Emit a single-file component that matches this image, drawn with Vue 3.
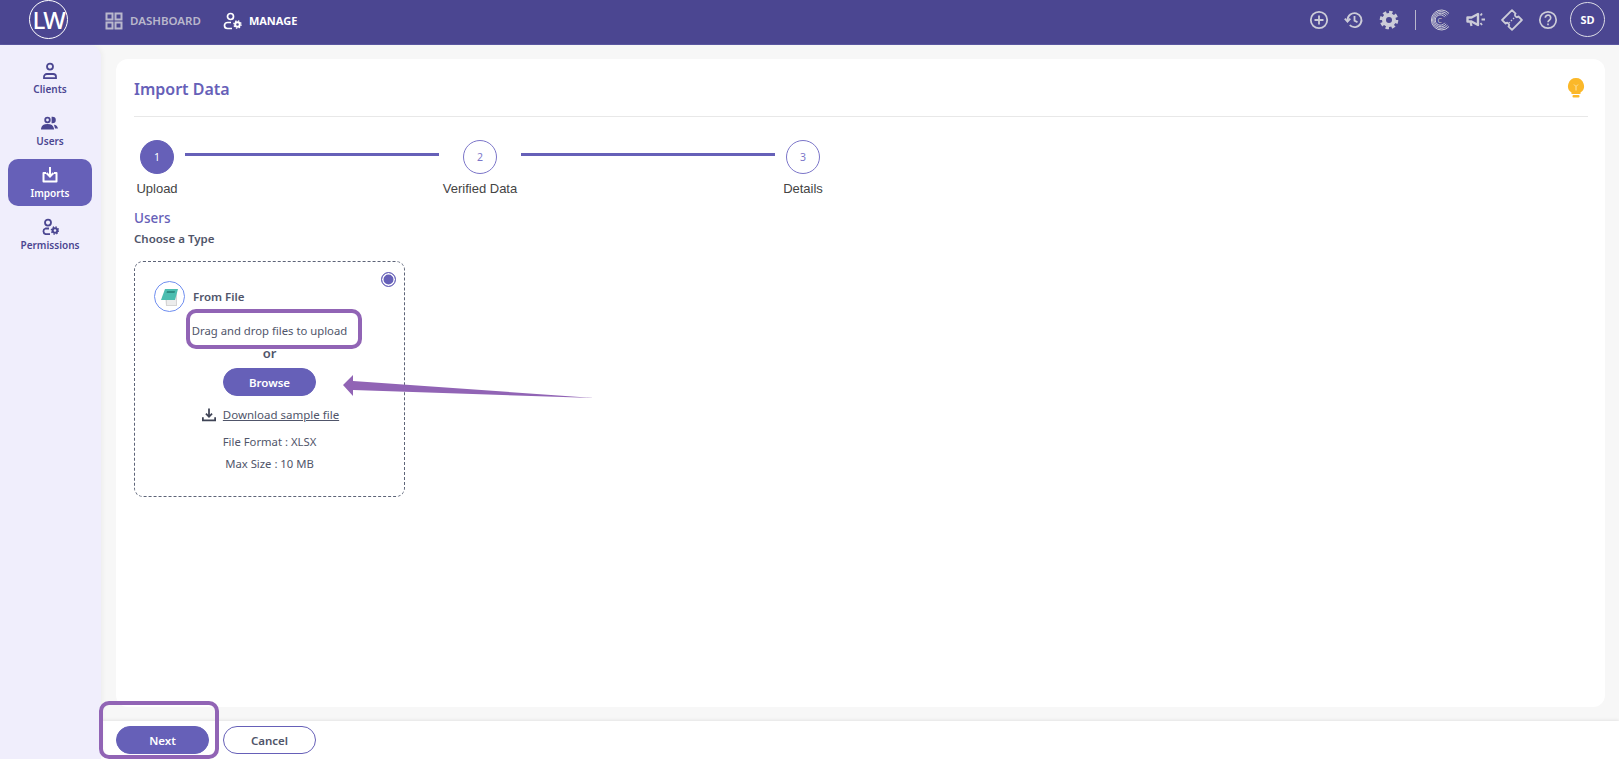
<template>
  <div class="page">
    <header class="topbar">
      <div class="logo">LW</div>
      <nav class="topnav">
        <a class="topnav-item">
          <svg width="18" height="18" viewBox="0 0 18 18" fill="none" stroke="currentColor" stroke-width="2">
            <rect x="1.5" y="1.5" width="6" height="6" /><rect x="10.5" y="1.5" width="6" height="6" />
            <rect x="1.5" y="10.5" width="6" height="6" /><rect x="10.5" y="10.5" width="6" height="6" />
          </svg>
          DASHBOARD
        </a>
        <a class="topnav-item active">
          <svg width="19" height="18" viewBox="0 0 19 18" fill="none" stroke="currentColor" stroke-width="1.7">
            <circle cx="7.5" cy="4.5" r="3" />
            <path d="M8 10.5H4.500a3 3 0 0 0 0 6H9" />
            <circle cx="14.5" cy="12.5" r="2.300" stroke-width="2" />
            <circle cx="14.5" cy="12.5" r="3.600" stroke-width="1.400" stroke-dasharray="1.400 1.430" />
          </svg>
          MANAGE
        </a>
      </nav>
      <div class="top-actions">
        <svg width="20" height="20" viewBox="0 0 20 20" fill="none" stroke="currentColor" stroke-width="1.8">
          <circle cx="10" cy="10" r="8.2" /><path d="M10 5.5v9M5.5 10h9" />
        </svg>
        <svg width="20" height="20" viewBox="0 0 20 20" fill="none" stroke="currentColor" stroke-width="1.8">
          <path d="M3.5 10a7 7 0 1 1 2.2 5.2" /><path d="M0.8 8.6l2.7 3 2.8-3" /><path d="M10.5 6v4.6l3 1.6" />
        </svg>
        <svg width="20" height="20" viewBox="0 0 20 20">
          <circle cx="10" cy="10" r="5" fill="none" stroke="currentColor" stroke-width="4" />
          <circle cx="10" cy="10" r="7.8" fill="none" stroke="currentColor" stroke-width="3" stroke-dasharray="3.4 2.7" />
        </svg>
        <span class="sep"></span>
        <svg width="22" height="22" viewBox="0 0 22 22" fill="none" stroke="currentColor" stroke-width="1">
          <path d="M20 4.500A10 10 0 1 0 20 17.500" /><path d="M18.600 5.800A8.400 8.400 0 1 0 18.600 16.200" />
          <path d="M17.200 7A6.800 6.800 0 1 0 17.200 15" /><path d="M15.800 8.200A5.200 5.200 0 1 0 15.800 13.800" />
          <text x="8.600" y="13.500" font-size="7" fill="currentColor" stroke="none" font-family="Noto Sans, sans-serif">C</text>
        </svg>
        <svg width="20" height="20" viewBox="0 0 20 20" fill="none" stroke="currentColor">
          <path d="M1.500 7.500h4L12 4v11L5.500 11.500h-4z" stroke-width="2.400" stroke-linejoin="round" />
          <path d="M4.500 12l1 4" stroke-width="2.200" />
          <path d="M14.500 5.500l1.500-2M15.500 9.500h3.500M14.500 13l1.500 2" stroke-width="1.800" />
        </svg>
        <svg width="22" height="22" viewBox="0 0 22 22" fill="none" stroke="currentColor" stroke-width="1.800">
          <g transform="rotate(45 11 11)">
            <path d="M4 4H9a2 2 0 0 0 4 0H18V18H13a2 2 0 0 0-4 0H4Z" stroke-linejoin="round" />
            <path d="M11 8v7" stroke-width="1.400" stroke-dasharray="1.500 1.500" />
          </g>
        </svg>
        <svg width="20" height="20" viewBox="0 0 20 20" fill="none" stroke="currentColor" stroke-width="1.7">
          <circle cx="10" cy="10" r="8.2" />
          <path d="M7.3 7.8a2.7 2.7 0 1 1 4.2 2.2c-1 .7-1.5 1.2-1.5 2.2" /><path d="M10 13.6v1.6" />
        </svg>
        <div class="avatar">SD</div>
      </div>
    </header>

    <div class="body">
      <aside class="sidebar">
        <a v-for="item in sideItems" :key="item.label" class="side-item" :class="{ active: item.active }">
          <svg width="18" height="18" viewBox="0 0 18 18" fill="none" stroke="currentColor" stroke-width="1.8">
            <g v-if="item.icon === 'client'">
              <circle cx="9" cy="4.6" r="3" /><path d="M3 16.2v-1.4a2.8 2.8 0 0 1 2.8-2.8h6.4a2.8 2.8 0 0 1 2.8 2.8v1.4z" />
            </g>
            <g v-else-if="item.icon === 'users'">
              <circle cx="6.5" cy="6" r="2.3" /><path d="M11.5 3.6a2.4 2.4 0 0 1 0 4.8z" fill="currentColor" />
              <path d="M1 14.5c.4-2.6 2.6-3.6 5.5-3.6s5 1 5.500 3.600z" fill="currentColor" />
              <path d="M13 10.800c2 .2 3.500 1.400 4 3.700h-3z" fill="currentColor" stroke="none" />
            </g>
            <g v-else-if="item.icon === 'imports'">
              <path d="M9 1v9M5.500 7l3.500 3.500L12.500 7" stroke-width="2" />
              <path d="M5 7H2.500v8.500h13V7H13" stroke-width="2" stroke-linejoin="round" />
            </g>
            <g v-else>
              <circle cx="7" cy="4.600" r="3" /><path d="M8 10.500H4.500a3 3 0 0 0 0 5.700H9" />
              <circle cx="14" cy="12.500" r="2.300" stroke-width="2" />
              <circle cx="14" cy="12.500" r="3.600" stroke-width="1.400" stroke-dasharray="1.400 1.430" />
            </g>
          </svg>
          <span>{{ item.label }}</span>
        </a>
      </aside>

      <main class="main">
        <section class="card">
          <div class="card-head">
            <h1>Import Data</h1>
            <svg width="18" height="21" viewBox="0 0 18 21">
              <path d="M9 1a8 8 0 0 0-4.500 14.600V17h9v-1.400A8 8 0 0 0 9 1z" fill="#fbb829" />
              <rect x="5.500" y="18" width="7" height="2.500" rx="1" fill="#fbb829" />
              <path d="M7 7.500L9 9.500l2-2M9 9.500v4" fill="none" stroke="#fde3a5" stroke-width="1" />
            </svg>
          </div>

          <div class="stepper">
            <template v-for="(step, i) in steps" :key="step.label">
              <div class="step" :class="{ current: i === 0 }">
                <div class="step-circle">{{ i + 1 }}</div>
                <div class="step-label">{{ step.label }}</div>
              </div>
              <div v-if="i < steps.length - 1" class="step-line" :class="{ second: i === 1 }"></div>
            </template>
          </div>

          <h2 class="section-title">Users</h2>
          <p class="section-sub">Choose a Type</p>

          <div class="drop-box">
            <span class="radio"></span>
            <div class="source">
              <span class="source-icon">
                <svg width="20" height="20" viewBox="0 0 20 20">
                  <path d="M5 6h12v13H6z" fill="#d4d4d4" />
                  <path d="M7 9h9v9H7z" fill="#ececec" />
                  <path d="M5 2h13l-3 11H1z" fill="#4cbdb0" />
                  <path d="M7 4h8l-.5 2H6.500z" fill="#2e8f85" />
                </svg>
              </span>
              <span class="source-name">From File</span>
            </div>
            <p class="drag-text">Drag and drop files to upload</p>
            <p class="or">or</p>
            <button class="btn primary">Browse</button>
            <a class="sample">
              <svg width="14" height="14" viewBox="0 0 16 15" fill="none" stroke="#3f4456" stroke-width="2">
                <path d="M8 0v9M4.500 6L8 9.500 11.500 6" /><path d="M1 10v3.500h14V10" />
              </svg>
              <span>Download sample file</span>
            </a>
            <p class="meta">File Format : XLSX</p>
            <p class="meta">Max Size : 10 MB</p>
          </div>
        </section>

        <footer class="footer">
          <button class="btn primary">Next</button>
          <button class="btn outline">Cancel</button>
        </footer>
      </main>
    </div>

    <!-- marks drawn over the screenshot -->
    <div class="mark mark-drag"></div>
    <div class="mark mark-next"></div>
    <svg class="mark-arrow" width="260" height="30" viewBox="0 0 260 30">
      <path d="M2 11L12 1v6l241 17-241-8v6z" fill="#9164b5" />
    </svg>
  </div>
</template>

<script setup>
  const sideItems = [
    { label: "Clients", icon: "client" },
    { label: "Users", icon: "users" },
    { label: "Imports", icon: "imports", active: true },
    { label: "Permissions", icon: "permissions" },
  ];

  const steps = [{ label: "Upload" }, { label: "Verified Data" }, { label: "Details" }];
</script>

<style>
  html,
  body {
    margin: 0;
    height: 100%;
    overflow: hidden;
  }
</style>

<style scoped>
  .page {
    position: relative;
    display: flex;
    flex-direction: column;
    width: 1619px;
    height: 759px;
    overflow: hidden;
    background: #f7f7f7;
    font-family: "Noto Sans", "Open Sans", sans-serif;
    color: #50556a;
  }

  .topbar {
    display: flex;
    align-items: center;
    flex: 0 0 45px;
    height: 45px;
    box-sizing: border-box;
    padding: 0 14px 0 29px;
    background: #4b4691;
    border-bottom: 1px solid #5b57a0;
  }

  .logo {
    display: flex;
    align-items: center;
    justify-content: center;
    width: 39px;
    height: 39px;
    margin-top: -6px;
    box-sizing: border-box;
    border: 1px solid #fff;
    border-radius: 50%;
    color: #fff;
    font-size: 24px;
    font-weight: 500;
    letter-spacing: -1.5px;
  }

  .topnav {
    display: flex;
    gap: 22px;
    margin-left: 37px;
    margin-top: -3px;
  }

  .topnav-item {
    display: flex;
    align-items: center;
    gap: 7px;
    color: #b9b7cc;
    font-size: 11.5px;
    font-weight: 600;
  }

  .topnav-item.active {
    color: #fff;
    font-size: 11px;
    font-weight: 700;
  }

  .top-actions {
    display: flex;
    align-items: center;
    gap: 15px;
    margin-left: auto;
    margin-top: -5px;
    color: #ccccd8;
  }

  .sep {
    width: 1px;
    height: 20px;
    margin: 0 -2.5px 0 1.5px;
    background: #b9b7cc;
  }

  .avatar {
    display: flex;
    align-items: center;
    justify-content: center;
    width: 35px;
    height: 35px;
    margin-left: -2.5px;
    box-sizing: border-box;
    border: 1px solid #dcdce6;
    border-radius: 50%;
    color: #fff;
    font-size: 11px;
    font-weight: 700;
  }

  .body {
    display: flex;
    flex: 1;
    min-height: 0;
  }

  .sidebar {
    display: flex;
    flex-direction: column;
    flex: 0 0 101px;
    box-sizing: border-box;
    padding: 10px 9px 0 8px;
    background: #f0eefc;
    border-top-right-radius: 12px;
    box-shadow: 2px 0 5px rgba(0, 0, 0, 0.04);
    z-index: 1;
  }

  .side-item {
    display: flex;
    flex-direction: column;
    align-items: center;
    justify-content: center;
    gap: 2px;
    height: 47px;
    margin-bottom: 5px;
    border-radius: 10px;
    color: #4b4691;
    font-size: 10px;
    font-weight: 600;
    line-height: 14px;
  }

  .side-item.active {
    background: #6660b8;
    color: #fff;
  }

  .main {
    display: flex;
    flex-direction: column;
    flex: 1;
    min-width: 0;
  }

  .card {
    flex: 1;
    margin: 14px 14px 14px 15px;
    padding: 0 17px 0 18px;
    background: #fff;
    border-radius: 12px;
  }

  .card-head {
    display: flex;
    align-items: center;
    justify-content: space-between;
    height: 57px;
    padding-right: 3px;
    border-bottom: 1px solid #e8e8e8;
  }

  .card-head h1 {
    margin: 2px 0 0;
    color: #6660b8;
    font-size: 16px;
    font-weight: 600;
  }

  .stepper {
    display: flex;
    margin-top: 23px;
    margin-left: 2px;
  }

  .step {
    display: flex;
    flex-direction: column;
    align-items: center;
    width: 42px;
  }

  .step-circle {
    display: flex;
    align-items: center;
    justify-content: center;
    width: 34px;
    height: 34px;
    box-sizing: border-box;
    border: 1px solid #7c76c9;
    border-radius: 50%;
    color: #7c76c9;
    font-size: 10.500px;
  }

  .step.current .step-circle {
    background: #6660b8;
    border-color: #6660b8;
    color: #fff;
  }

  .step-label {
    margin-top: 7px;
    color: #444;
    font-family: "Liberation Sans", Arial, sans-serif;
    font-size: 13px;
    line-height: 16px;
    white-space: nowrap;
  }

  .step-line {
    width: 254px;
    height: 3px;
    margin: 13px 20px 0 7px;
    background: #6660b8;
  }

  .step-line.second {
    margin-left: 20px;
    margin-right: 7px;
  }

  .section-title {
    margin: 11px 0 0;
    color: #6660b8;
    font-size: 13.500px;
    font-weight: 500;
    line-height: 20px;
  }

  .section-sub {
    margin: 2px 0 0;
    font-size: 11.500px;
    font-weight: 600;
    line-height: 18px;
  }

  .drop-box {
    position: relative;
    display: flex;
    flex-direction: column;
    align-items: center;
    width: 271px;
    height: 236px;
    margin-top: 13px;
    box-sizing: border-box;
    padding-top: 19px;
    border: 1px dashed #5d6478;
    border-radius: 9px;
  }

  .radio {
    position: absolute;
    top: 10px;
    right: 8px;
    width: 15px;
    height: 15px;
    box-sizing: border-box;
    border: 1.500px solid #6660b8;
    border-radius: 50%;
    background: #6660b8;
    box-shadow: inset 0 0 0 1.500px #fff;
  }

  .source {
    display: flex;
    align-items: center;
    gap: 8px;
    align-self: flex-start;
    margin-left: 19px;
  }

  .source-icon {
    display: flex;
    align-items: center;
    justify-content: center;
    width: 31px;
    height: 31px;
    box-sizing: border-box;
    border: 1px solid #6f8ef0;
    border-radius: 50%;
  }

  .source-name {
    font-size: 11.500px;
    font-weight: 600;
  }

  .drag-text {
    margin: 9px 0 0;
    font-size: 11.300px;
    line-height: 20px;
    white-space: nowrap;
  }

  .or {
    margin: 3px 0 0;
    font-size: 13px;
    font-weight: 600;
    line-height: 18px;
  }

  .btn {
    width: 93px;
    height: 28px;
    padding: 0;
    border: 1px solid #6660b8;
    border-radius: 14px;
    font-family: inherit;
    font-size: 11.500px;
    font-weight: 600;
  }

  .btn.primary {
    background: #6660b8;
    color: #fff;
  }

  .btn.outline {
    background: #fff;
    color: #50556a;
  }

  .drop-box .btn {
    margin-top: 6px;
  }

  .sample {
    display: flex;
    align-items: center;
    gap: 7px;
    margin-top: 10px;
    margin-left: 2px;
    font-size: 11.500px;
    line-height: 18px;
  }

  .sample span {
    text-decoration: underline;
  }

  .meta {
    margin: 4px 0 0;
    font-size: 11.300px;
    line-height: 18px;
  }

  .sample + .meta {
    margin-top: 9px;
  }

  .footer {
    display: flex;
    align-items: center;
    gap: 14px;
    flex: 0 0 38px;
    box-sizing: border-box;
    padding: 0 15px;
    background: #fff;
    box-shadow: 0 -1px 3px rgba(0, 0, 0, 0.08);
  }

  .mark {
    position: absolute;
    box-sizing: border-box;
    border: 4px solid #9164b5;
    border-radius: 10px;
    z-index: 2;
  }

  .mark-drag {
    left: 186px;
    top: 309px;
    width: 176px;
    height: 40px;
  }

  .mark-next {
    left: 99px;
    top: 701px;
    width: 120px;
    height: 58px;
  }

  .mark-arrow {
    position: absolute;
    left: 341px;
    top: 374px;
    z-index: 2;
  }
</style>
